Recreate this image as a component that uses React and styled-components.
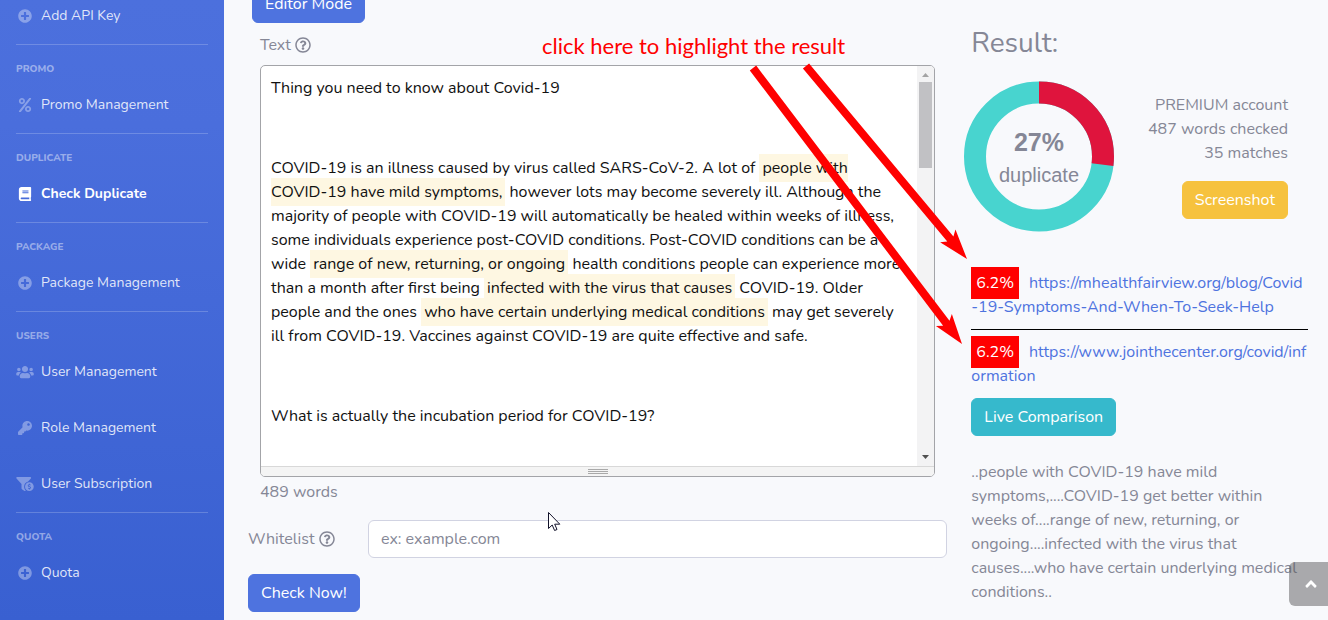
import React from 'react'
import styled, { createGlobalStyle } from 'styled-components'
import {
  FaAngleUp,
  FaBook,
  FaFunnelDollar,
  FaKey,
  FaPercent,
  FaPlusCircle,
  FaRegQuestionCircle,
  FaUsers,
} from 'react-icons/fa'

const GlobalStyle = createGlobalStyle`
  * {
    box-sizing: border-box;
  }

  body {
    margin: 0;
    background: #f8f9fc;
    color: #858796;
    font-family: Nunito, Lato, sans-serif;
    font-size: 16px;
    line-height: 24px;
  }

  p {
    margin: 0;
  }
`

const Page = styled.div`
  position: relative;
  display: flex;
  height: 100vh;
  overflow: hidden;
`

const Sidebar = styled.nav`
  flex: none;
  width: 224px;
  overflow: hidden;
  background: linear-gradient(180deg, #4c70dd 0%, #4a6edc 20%, #3960d1 100%);
`

const NavSection = styled.section`
  margin: 0 16px;
  border-top: 1px solid rgba(255, 255, 255, 0.2);

  &:first-child {
    margin-top: -13px;
  }

  h2 {
    margin: 0;
    padding-top: 16px;
    color: rgba(255, 255, 255, 0.45);
    font-size: 10px;
    font-weight: 800;
    line-height: 16px;
    text-transform: uppercase;
  }
`

const NavLink = styled.a`
  display: flex;
  align-items: center;
  gap: 7px;
  padding: 16px 0;
  color: ${p => (p.$active ? '#fff' : 'rgba(255, 255, 255, 0.85)')};
  font-size: 14px;
  font-weight: ${p => (p.$active ? 700 : 400)};
  text-decoration: none;

  svg {
    width: 18px;
    height: 14px;
    color: ${p => (p.$active ? '#fff' : 'rgba(255, 255, 255, 0.35)')};
  }
`

const Content = styled.main`
  flex: 1;
  display: grid;
  grid-template-columns: minmax(0, 27fr) minmax(0, 13fr);
  align-items: start;
  gap: 24px;
  padding: 0 20px 0 24px;
`

const Checker = styled.form`
  margin-top: -15px;
`

const Button = styled.button`
  display: block;
  height: 38px;
  padding: 0 12px;
  border: 1px solid ${p => p.$color};
  border-radius: 6px;
  background: ${p => p.$color};
  color: #fff;
  font: inherit;
`

const ModeButton = styled(Button)`
  margin: 0 4px 10px;
`

const EditorField = styled.div`
  padding: 0 12px;
`

const Label = styled.label`
  display: flex;
  align-items: center;
  gap: 4px;
`

const EditorLabel = styled(Label)`
  margin-bottom: 8px;
`

const Editor = styled.div`
  border: 1px solid #a3a4a8;
  border-radius: 5px;
  background: #fff;
  overflow: hidden;
`

const EditorBody = styled.div`
  display: flex;
  height: 400px;
`

const EditorText = styled.div`
  flex: 1;
  padding: 10px;
  overflow: hidden;
  color: #111;
  outline: none;

  p {
    min-height: 24px;
    margin-bottom: 16px;
  }

  mark {
    padding: 3px;
    background: #fef7e2;
    color: inherit;
  }
`

const Scrollbar = styled.div`
  display: flex;
  flex-direction: column;
  align-items: center;
  width: 17px;
  padding: 7px 0;
  background: #f3f3f4;
`

const Thumb = styled.div`
  width: 13px;
  height: 86px;
  margin: 5px 0 auto;
  background: #c1c1c4;
`

const ResizeBar = styled.div`
  display: flex;
  justify-content: center;
  align-items: center;
  height: 10px;
  border-top: 1px solid #d8d8d8;
  background: #f4f4f4;
`

const WordCount = styled.p`
  padding-top: 3px;
`

const WhitelistRow = styled.div`
  display: flex;
  align-items: center;
  margin: 16px 0;

  label {
    flex: none;
    width: 120px;
  }

  input {
    flex: 1;
    min-width: 0;
    height: 38px;
    padding: 0 12px;
    border: 1px solid #d1d3e2;
    border-radius: 6px;
    background: #fff;
    font: inherit;
  }

  input::placeholder {
    color: #858796;
    opacity: 1;
  }
`

const Result = styled.section`
  padding-top: 26px;

  h1 {
    margin: 0 0 21px;
    font-size: 28px;
    font-weight: 400;
    line-height: 34px;
  }
`

const Summary = styled.div`
  display: flex;
  justify-content: space-between;
  align-items: flex-start;
  margin: 0 20px 29px -7px;
`

const Account = styled.div`
  display: flex;
  flex-direction: column;
  align-items: flex-end;
  padding-top: 12px;

  button {
    margin-top: 16px;
  }
`

const ChartText = styled.text`
  fill: #858796;
  font-family: 'Liberation Sans', Arial, sans-serif;
  font-size: ${p => p.$size}px;
  font-weight: ${p => p.$weight};
  text-anchor: middle;
`

const Match = styled.p`
  padding: 10px 0;
  word-break: break-all;

  & + & {
    border-top: 1px solid #000;
  }

  a {
    color: #4e73df;
    text-decoration: none;
  }
`

const Badge = styled.span`
  margin-right: 10px;
  padding: 5px;
  background: #f00;
  color: #fff;
`

const Snippet = styled.p`
  margin-top: 24px;
`

const ScrollTop = styled.a`
  position: absolute;
  right: -5px;
  bottom: 14px;
  display: flex;
  justify-content: center;
  align-items: center;
  width: 44px;
  height: 44px;
  border-radius: 6px;
  background: rgba(90, 90, 92, 0.5);
  color: #fff;
`

const Overlay = styled.svg`
  position: absolute;
  inset: 0;
  width: 100%;
  height: 100%;
  pointer-events: none;
`

const Callout = styled.p`
  position: absolute;
  top: 30px;
  left: 542px;
  color: #f00;
  font-family: Lato, 'Open Sans', sans-serif;
  font-size: 22px;
  line-height: 32px;
  white-space: nowrap;
`

const sections = [
  { links: [{ label: 'Add API Key', icon: FaPlusCircle }] },
  { title: 'Promo', links: [{ label: 'Promo Management', icon: FaPercent }] },
  { title: 'Duplicate', links: [{ label: 'Check Duplicate', icon: FaBook, active: true }] },
  { title: 'Package', links: [{ label: 'Package Management', icon: FaPlusCircle }] },
  {
    title: 'Users',
    links: [
      { label: 'User Management', icon: FaUsers },
      { label: 'Role Management', icon: FaKey },
      { label: 'User Subscription', icon: FaFunnelDollar },
    ],
  },
  { title: 'Quota', links: [{ label: 'Quota', icon: FaPlusCircle }] },
]

const matches = [
  { percent: '6.2%', url: 'https://mhealthfairview.org/blog/Covid-19-Symptoms-And-When-To-Seek-Help' },
  { percent: '6.2%', url: 'https://www.jointhecenter.org/covid/information' },
]

function Donut({ percent }) {
  const radius = 64
  const length = 2 * Math.PI * radius

  return (
    <svg width='150' height='151' viewBox='0 0 150 151' role='img' aria-label='Duplicate share'>
      <g fill='none' strokeWidth='22' transform='rotate(-90 75 75.5)'>
        <circle cx='75' cy='75.5' r={radius} stroke='#48d4cf' />
        <circle
          cx='75'
          cy='75.5'
          r={radius}
          stroke='#df143d'
          strokeDasharray={`${(length * percent) / 100} ${length}`}
        />
      </g>
      <ChartText x='75' y='70' $size={25} $weight={700}>
        {percent}%
      </ChartText>
      <ChartText x='75' y='101' $size={20} $weight={400}>
        duplicate
      </ChartText>
    </svg>
  )
}

function Arrow({ from, to }) {
  const dx = to[0] - from[0]
  const dy = to[1] - from[1]
  const length = Math.hypot(dx, dy)
  const angle = (Math.atan2(dy, dx) * 180) / Math.PI

  return (
    <path
      fill='#f00'
      transform={`translate(${to[0]} ${to[1]}) rotate(${angle})`}
      d={`M0 0L-30 -10L-26 -4H${-length}V4H-26L-30 10Z`}
    />
  )
}

export default function App() {
  return (
    <Page>
      <GlobalStyle />

      <Sidebar>
        {sections.map(({ title, links }) => (
          <NavSection key={title || 'api'}>
            {title && <h2>{title}</h2>}
            {links.map(({ label, icon: Icon, active }) => (
              <NavLink key={label} href='#' $active={active}>
                <Icon />
                {label}
              </NavLink>
            ))}
          </NavSection>
        ))}
      </Sidebar>

      <Content>
        <Checker onSubmit={event => event.preventDefault()}>
          <ModeButton type='button' $color='#4e73df'>
            Editor Mode
          </ModeButton>

          <EditorField>
            <EditorLabel as='div' id='text-label'>
              Text <FaRegQuestionCircle />
            </EditorLabel>

            <Editor>
              <EditorBody>
                <EditorText
                  role='textbox'
                  aria-multiline='true'
                  aria-labelledby='text-label'
                  contentEditable
                  suppressContentEditableWarning
                  spellCheck={false}
                >
                  <p>Thing you need to know about Covid-19</p>
                  <p />
                  <p>
                    COVID-19 is an illness caused by virus called SARS-CoV-2. A lot of{' '}
                    <mark>people with COVID-19 have mild symptoms,</mark> however lots may become severely
                    ill. Although the majority of people with COVID-19 will automatically be healed within
                    weeks of illness, some individuals experience post-COVID conditions. Post-COVID
                    conditions can be a wide <mark>range of new, returning, or ongoing</mark> health
                    conditions people can experience more than a month after first being{' '}
                    <mark>infected with the virus that causes</mark> COVID-19. Older people and the ones{' '}
                    <mark>who have certain underlying medical conditions</mark> may get severely ill from
                    COVID-19. Vaccines against COVID-19 are quite effective and safe.
                  </p>
                  <p />
                  <p>What is actually the incubation period for COVID-19?</p>
                </EditorText>

                <Scrollbar>
                  <svg width='7' height='4' viewBox='0 0 7 4'>
                    <path d='M0 4L3.5 0L7 4Z' fill='#a3a3a3' />
                  </svg>
                  <Thumb />
                  <svg width='7' height='4' viewBox='0 0 7 4'>
                    <path d='M0 0L3.5 4L7 0Z' fill='#505050' />
                  </svg>
                </Scrollbar>
              </EditorBody>

              <ResizeBar>
                <svg width='20' height='5' viewBox='0 0 20 5'>
                  <path d='M0 0.5H20M0 2.5H20M0 4.5H20' stroke='#a9a9a9' />
                </svg>
              </ResizeBar>
            </Editor>

            <WordCount>489 words</WordCount>
          </EditorField>

          <WhitelistRow>
            <Label htmlFor='whitelist'>
              Whitelist <FaRegQuestionCircle />
            </Label>
            <input id='whitelist' type='text' placeholder='ex: example.com' />
          </WhitelistRow>

          <Button type='submit' $color='#4e73df'>
            Check Now!
          </Button>
        </Checker>

        <Result>
          <h1>Result:</h1>

          <Summary>
            <Donut percent={27} />
            <Account>
              <span>PREMIUM account</span>
              <span>487 words checked</span>
              <span>35 matches</span>
              <Button type='button' $color='#f6c23e'>
                Screenshot
              </Button>
            </Account>
          </Summary>

          {matches.map(({ percent, url }) => (
            <Match key={url}>
              <Badge>{percent}</Badge>
              <a href={url}>{url}</a>
            </Match>
          ))}

          <Button type='button' $color='#36b9cc'>
            Live Comparison
          </Button>

          <Snippet>
            ..people with COVID-19 have mild symptoms,....COVID-19 get better within weeks of....range of
            new, returning, or ongoing....infected with the virus that causes....who have certain underlying
            medical conditions..
          </Snippet>
        </Result>
      </Content>

      <ScrollTop href='#' aria-label='Scroll to top'>
        <FaAngleUp size={18} />
      </ScrollTop>

      <Callout>click here to highlight the result</Callout>

      <Overlay aria-hidden='true'>
        <Arrow from={[753, 68]} to={[962, 344]} />
        <Arrow from={[806, 66]} to={[967, 259]} />
        <path
          d='M548.5 512.5V528.5L552.2 525L554.6 530.5L557 529.5L554.7 524.2H559.8Z'
          fill='#fff'
          stroke='#12122a'
        />
      </Overlay>
    </Page>
  )
}
